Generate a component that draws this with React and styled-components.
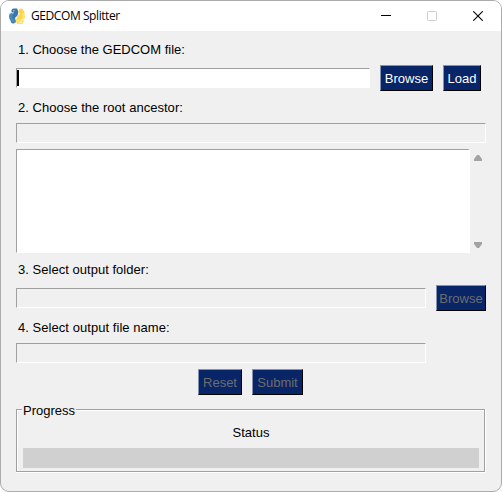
import React from "react";
import styled, { createGlobalStyle } from "styled-components";

const GlobalStyle = createGlobalStyle`
  * { box-sizing: border-box; }
  body { margin: 0; background: #fff; overflow: hidden; }
`;

const Window = styled.div`
  width: 502px;
  height: 492px;
  display: flex;
  flex-direction: column;
  background: #f0f0f0;
  border: 1px solid #ababab;
  border-radius: 9px;
  overflow: hidden;
  font: 13px/15px "Liberation Sans", Arial, sans-serif;
  color: #000;
`;

const TitleBar = styled.header`
  height: 30px;
  flex: none;
  display: flex;
  align-items: center;
  padding-left: 8px;
  background: #fff;
`;

const Title = styled.h1`
  flex: 1;
  margin: 0 0 0 5px;
  font: 400 12px/16px "Segoe UI", "Open Sans", sans-serif;
  letter-spacing: -0.42px;
`;

const Control = styled.span`
  width: 46px;
  height: 30px;
  display: flex;
  align-items: center;
  justify-content: center;
  color: ${(p) => (p.$disabled ? "#ccc" : "#000")};
`;

const Body = styled.main`
  flex: 1;
  display: flex;
  flex-direction: column;
  padding: 11px 15px 0;
`;

const Label = styled.label`
  height: 15px;
  margin: 0 0 ${(p) => p.$gap}px 2px;
  letter-spacing: ${(p) => p.$tracking || 0}px;
  white-space: pre;
`;

const Row = styled.div`
  display: flex;
  align-items: center;
  gap: 10px;
  height: ${(p) => p.$height}px;
  margin-bottom: ${(p) => p.$gap}px;
  justify-content: ${(p) => (p.$center ? "center" : "flex-start")};
  padding-right: ${(p) => (p.$center ? 1 : 0)}px;
`;

const Field = styled.div`
  width: ${(p) => p.$width}px;
  height: 20px;
  border: 1px solid;
  border-color: #a0a0a0 #fff #fff #a0a0a0;
  background: ${(p) => (p.$active ? "#fff" : "#f0f0f0")};
`;

const Caret = styled.span`
  display: block;
  width: 2px;
  height: 16px;
  margin: 1px 0 0 0;
  background: #000;
`;

const Button = styled.button`
  width: ${(p) => p.$width}px;
  height: 26px;
  padding: 1px 0 0;
  border: 1px solid;
  border-color: #8492b2 #000 #000 #8492b2;
  border-radius: 0;
  background: #082567;
  color: ${(p) => (p.disabled ? "#6d6d6d" : "#fff")};
  font: inherit;
  text-align: center;
  white-space: nowrap;
`;

const ListArea = styled.div`
  display: flex;
  height: 104px;
  margin-bottom: 9px;
`;

const ListBox = styled.div`
  width: 454px;
  border: solid;
  border-width: 1px 2px 1px 1px;
  border-color: #a0a0a0 #fff #fff #a0a0a0;
  background: #fff;
`;

const ScrollBar = styled.div`
  width: 16px;
  display: flex;
  flex-direction: column;
  align-items: center;
  justify-content: space-between;
  padding: 6px 0 5px;
`;

const Group = styled.fieldset`
  width: 470px;
  height: 71px;
  margin: 0;
  padding: 0 6px;
  border: 0;
  display: grid;
  grid-template-rows: 16px 16px 7px 20px;
  grid-template-columns: 1fr;
  background:
    linear-gradient(#a0a0a0, #a0a0a0) 0 7px / 469px 1px no-repeat,
    linear-gradient(#a0a0a0, #a0a0a0) 0 7px / 1px 63px no-repeat,
    linear-gradient(#a0a0a0, #a0a0a0) 468px 7px / 1px 63px no-repeat,
    linear-gradient(#a0a0a0, #a0a0a0) 0 69px / 469px 1px no-repeat,
    linear-gradient(#fff, #fff) 1px 8px / 467px 1px no-repeat,
    linear-gradient(#fff, #fff) 1px 8px / 1px 61px no-repeat,
    linear-gradient(#fff, #fff) 0 70px / 470px 1px no-repeat,
    linear-gradient(#fff, #fff) 469px 7px / 1px 64px no-repeat;
`;

const GroupTitle = styled.span`
  justify-self: start;
  height: 16px;
  padding: 1px 1px 0;
  background: #f0f0f0;
`;

const Status = styled.div`
  padding-top: 7px;
  text-align: center;
`;

const ProgressTrack = styled.div`
  grid-row: 4;
  width: 456px;
  margin-left: 1px;
  margin-top: 7px;
  height: 20px;
  background: #d0d0d0;
`;

const Logo = () => (
  <svg width="17" height="17" viewBox="0 0 17 17" fill="none">
    <path d="M12 3.2Q13.3 4.4 12.9 6.6Q12.6 8.3 10.8 9.2Q9.2 10.3 9.8 13.2H12" stroke="#ffd64a" strokeWidth="5" strokeLinecap="round" />
    <path d="M9.8 13.6H12.4" stroke="#ffe16f" strokeWidth="4.4" strokeLinecap="round" />
    <path d="M13.8 6.2Q15.3 8.8 13.8 11" stroke="#ffe16f" strokeWidth="3" strokeLinecap="round" />
    <path d="M4.9 3H6.4Q7.6 6.2 5 7.6Q3.2 8.8 4.2 13" stroke="#3b78aa" strokeWidth="5" strokeLinecap="round" />
    <path d="M2.2 6.2Q.9 9 2.4 11L5 13.4" stroke="#4a8bbd" strokeWidth="3.2" strokeLinecap="round" />
    <path d="M.7 5.4Q2.4 4.3 4.6 4.8" stroke="#fff" strokeWidth=".8" />
    <path d="M12 12Q14.2 12.1 15.8 10.8" stroke="#fff" strokeWidth=".7" />
    <path d="M9.5 5.6Q9.2 7.9 7.4 8.8Q6.6 9.5 6.8 11.4" stroke="#fff" strokeWidth=".5" />
    <circle cx="4.9" cy="2.8" r=".65" fill="#fff" />
    <circle cx="12" cy="14" r=".65" fill="#fff" />
  </svg>
);

const Arrow = ({ down }) => (
  <svg width="8" height="6" viewBox="0 0 8 6">
    <path
      d={down ? "M0 0h8v2L5 6H3L0 2z" : "M0 6h8V4L5 0H3L0 4z"}
      fill="#a3a3a3"
    />
  </svg>
);

export default function App() {
  return (
    <>
      <GlobalStyle />
      <Window>
        <TitleBar>
          <Logo />
          <Title>GEDCOM Splitter</Title>
          <Control>
            <svg width="10" height="10" shapeRendering="crispEdges">
              <path d="M0 5.5h10" stroke="currentColor" transform="translate(0 -1)" />
            </svg>
          </Control>
          <Control $disabled>
            <svg width="10" height="10">
              <rect x=".5" y=".5" width="9" height="9" rx="1" fill="none" stroke="currentColor" />
            </svg>
          </Control>
          <Control>
            <svg width="10" height="10">
              <path d="M.3.3l9.4 9.4M9.7.3L.3 9.7" stroke="currentColor" strokeWidth="1.1" />
            </svg>
          </Control>
        </TitleBar>
        <Body>
          <Label $gap={8}>1. Choose the GEDCOM file:</Label>
          <Row $height={26} $gap={9}>
            <Field $width={354} $active>
              <Caret />
            </Field>
            <Button $width={53}>Browse</Button>
            <Button $width={38}>Load</Button>
          </Row>
          <Label $gap={8} $tracking={0.03}>2. Choose the root ancestor:</Label>
          <Row $height={20} $gap={6}>
            <Field $width={470} />
          </Row>
          <ListArea>
            <ListBox />
            <ScrollBar>
              <Arrow />
              <Arrow down />
            </ScrollBar>
          </ListArea>
          <Label $gap={8} $tracking={0.03}>3. Select output folder:</Label>
          <Row $height={26} $gap={9}>
            <Field $width={410} />
            <Button $width={50} disabled>Browse</Button>
          </Row>
          <Label $gap={8} $tracking={0.05}>4. Select output file name:</Label>
          <Row $height={20} $gap={6}>
            <Field $width={410} />
          </Row>
          <Row $height={26} $gap={7} $center>
            <Button $width={44} disabled>Reset</Button>
            <Button $width={51} disabled>Submit</Button>
          </Row>
          <Group>
            <GroupTitle>Progress</GroupTitle>
            <Status>Status</Status>
            <ProgressTrack />
          </Group>
        </Body>
      </Window>
    </>
  );
}
